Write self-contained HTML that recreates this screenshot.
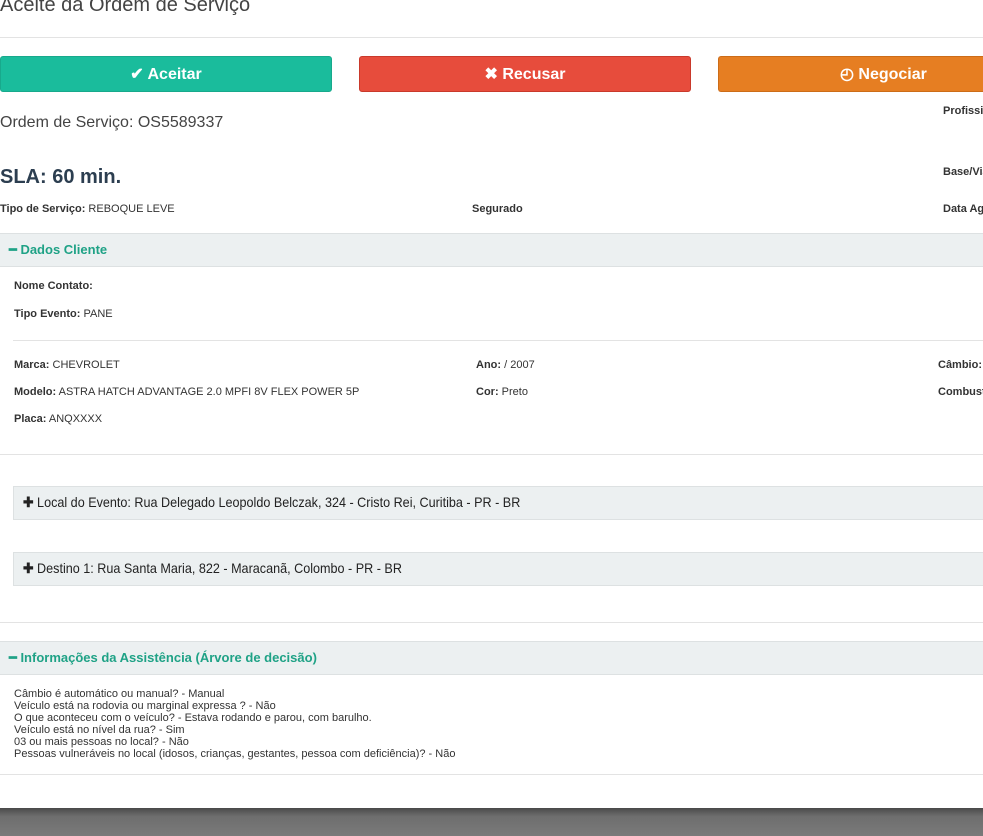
<!DOCTYPE html>
<html><head><meta charset="utf-8"><style>
*{margin:0;padding:0;box-sizing:border-box}
html,body{overflow:hidden}
body{width:983px;height:836px;background:#fff;font-family:"Liberation Sans",Arial,sans-serif;color:#333;position:relative}
.a{position:absolute;white-space:nowrap}
.hr{position:absolute;height:1px;background:#e3e3e3}
.btn{position:absolute;top:56px;height:36px;border-radius:3px;color:#fff;font-weight:bold;font-size:16px;text-align:center;line-height:35px}
.lbl{font-size:11px;color:#333}
.lbl b{font-weight:bold}
.sh{position:absolute;left:0;width:983px;height:34px;background:#ecf0f1;border-top:1px solid #dde1e2;border-bottom:1px solid #dde1e2;color:#1fa286;font-size:13px;font-weight:bold;line-height:32px;padding-left:9px}
.box{position:absolute;left:13px;width:970px;height:34px;background:#ecf0f1;border:1px solid #dde1e2;border-right:none;font-size:14px;line-height:31px;padding-left:9px;color:#222;overflow:hidden}
.box span{display:inline-block;transform:scaleX(0.9);transform-origin:left}
</style></head><body>
<div class="a" style="left:0;top:-6px;font-size:20px;color:#444">Aceite da Ordem de Serviço</div>
<div class="hr" style="left:0;top:37px;width:983px"></div>
<div class="btn" style="left:0;width:332px;background:#1abc9c;border:1px solid #18a98c">✔ Aceitar</div>
<div class="btn" style="left:359px;width:332px;background:#e74c3c;border:1px solid #c9392b">✖ Recusar</div>
<div class="btn" style="left:718px;width:265px;background:#e67e22;border:1px solid #cc6c18;border-right:none;border-radius:3px 0 0 3px;padding-left:121px;text-align:left">◴ Negociar</div>
<div class="a" style="left:0;top:114px;font-size:16px;color:#444">Ordem de Serviço: OS5589337</div>
<div class="a lbl" style="left:943px;top:105px;width:40px;overflow:hidden"><b>Profissional</b></div>
<div class="a" style="left:0;top:166px;font-size:20px;font-weight:bold;color:#2c3e50">SLA: 60 min.</div>
<div class="a lbl" style="left:943px;top:166px;width:40px;overflow:hidden"><b>Base/Viatura</b></div>
<div class="a lbl" style="left:0;top:203px"><b>Tipo de Serviço:</b> REBOQUE LEVE</div>
<div class="a lbl" style="left:472px;top:203px"><b>Segurado</b></div>
<div class="a lbl" style="left:943px;top:203px;width:40px;overflow:hidden"><b>Data Agendamento</b></div>
<div class="sh" style="top:233px">━ Dados Cliente</div>
<div class="a lbl" style="left:14px;top:280px"><b>Nome Contato:</b></div>
<div class="a lbl" style="left:14px;top:308px"><b>Tipo Evento:</b> PANE</div>
<div class="hr" style="left:13px;top:340px;width:970px"></div>
<div class="a lbl" style="left:14px;top:359px"><b>Marca:</b> CHEVROLET</div>
<div class="a lbl" style="left:476px;top:359px"><b>Ano:</b> / 2007</div>
<div class="a lbl" style="left:938px;top:359px;width:45px;overflow:hidden"><b>Câmbio:</b></div>
<div class="a lbl" style="left:14px;top:386px"><b>Modelo:</b> ASTRA HATCH ADVANTAGE 2.0 MPFI 8V FLEX POWER 5P</div>
<div class="a lbl" style="left:476px;top:386px"><b>Cor:</b> Preto</div>
<div class="a lbl" style="left:938px;top:386px;width:45px;overflow:hidden"><b>Combustível</b></div>
<div class="a lbl" style="left:14px;top:413px"><b>Placa:</b> ANQXXXX</div>
<div class="hr" style="left:0;top:454px;width:983px"></div>
<div class="box" style="top:486px"><span><b>✚</b> Local do Evento: Rua Delegado Leopoldo Belczak, 324 - Cristo Rei, Curitiba - PR - BR</span></div>
<div class="box" style="top:552px"><span><b>✚</b> Destino 1: Rua Santa Maria, 822 - Maracanã, Colombo - PR - BR</span></div>
<div class="hr" style="left:0;top:622px;width:983px"></div>
<div class="sh" style="top:641px">━ Informações da Assistência (Árvore de decisão)</div>
<div class="a" style="left:14px;top:688px;font-size:11px;line-height:12px;color:#333">Câmbio é automático ou manual? - Manual<br>Veículo está na rodovia ou marginal expressa ? - Não<br>O que aconteceu com o veículo? - Estava rodando e parou, com barulho.<br>Veículo está no nível da rua? - Sim<br>03 ou mais pessoas no local? - Não<br>Pessoas vulneráveis no local (idosos, crianças, gestantes, pessoa com deficiência)? - Não</div>
<div class="hr" style="left:0;top:774px;width:983px"></div>
<div style="position:absolute;left:0;top:808px;width:983px;height:28px;background:linear-gradient(#4a4a4a,#6e6e6e 30%,#7a7a7a)"></div>
</body></html>
